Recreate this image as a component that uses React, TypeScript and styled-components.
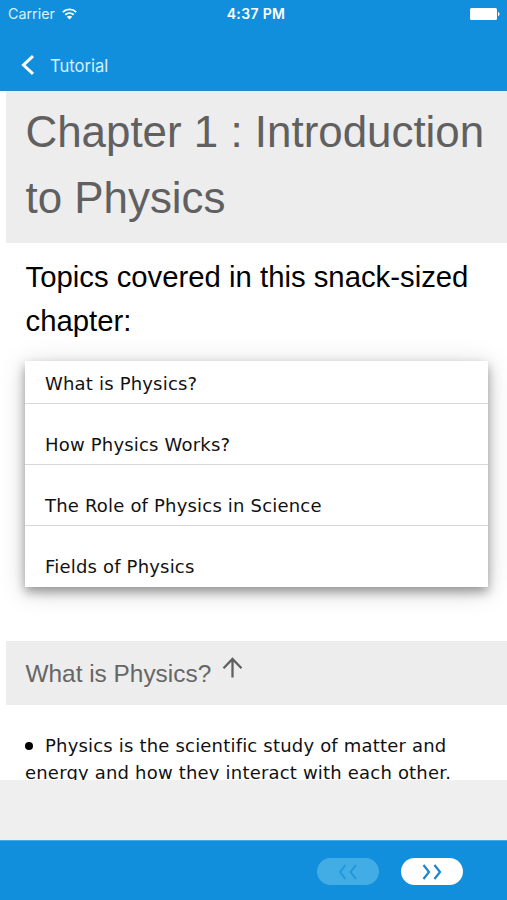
import React from "react";
import styled, { createGlobalStyle } from "styled-components";

const GlobalStyle = createGlobalStyle`
  html, body { margin: 0; padding: 0; background: #fff; }
  * { box-sizing: border-box; }
`;

const BLUE = "#128fdc";

const Screen = styled.div`
  width: 507px;
  height: 900px;
  display: flex;
  flex-direction: column;
  overflow: hidden;
  background: #fff;
`;

const Header = styled.header`
  flex: none;
  height: 91px;
  background: ${BLUE};
  border-bottom: 1px solid #2a86c2;
  color: #fff;
  font-family: Inter, sans-serif;
`;

const StatusBar = styled.div`
  height: 28px;
  display: grid;
  grid-template-columns: 1fr auto 1fr;
  align-items: center;
  padding: 0 7px 0 8px;
`;

const Carrier = styled.div`
  display: flex;
  align-items: center;
  gap: 7px;
  font-size: 14.3px;
  line-height: 20px;
  color: #d9f0ff;
`;

const Clock = styled.div`
  padding-left: 4px;
  font-size: 14px;
  line-height: 20px;
  font-weight: 600;
  letter-spacing: 0.35px;
`;

const BatterySlot = styled.div`
  display: flex;
  justify-content: flex-end;
`;

const NavBar = styled.div`
  height: 62px;
  display: flex;
  align-items: center;
  gap: 15px;
  padding: 12px 0 0 21px;
`;

const NavTitle = styled.span`
  padding-top: 1px;
  font-size: 16.6px;
  line-height: 24px;
  color: #d5eeff;
`;

const Content = styled.main`
  flex: none;
  height: 688.5px;
  overflow: hidden;
  padding-left: 6px;
`;

const ChapterTitle = styled.h1`
  margin: 0;
  height: 152px;
  padding: 8px 0 0 19.5px;
  background: #ededed;
  color: #606060;
  font: 400 43.9px/66px "Liberation Sans", Arial, sans-serif;
`;

const TopicsHeading = styled.h2`
  margin: 12px 0 0 19.5px;
  font: 400 29.3px/44px "Liberation Sans", Arial, sans-serif;
  color: #000;
`;

const TopicCard = styled.ul`
  margin: 18px 19px 0 19px;
  padding: 0;
  list-style: none;
  background: #fff;
  box-shadow: 0 5px 10px rgba(0, 0, 0, 0.36), 0 4px 26px rgba(0, 0, 0, 0.16);
`;

const TopicRow = styled.li<{ $first?: boolean; $last?: boolean }>`
  height: ${(p) => (p.$first ? 43 : p.$last ? 60.5 : 61)}px;
  padding: ${(p) => (p.$first ? 9 : 27)}px 0 0 20px;
  border-bottom: ${(p) => (p.$last ? "none" : "1px solid #d8d8d8")};
  font: 400 18px/27px "DejaVu Sans", Verdana, sans-serif;
  color: #111;
`;

const SectionHeading = styled.h3`
  display: flex;
  gap: 11px;
  margin: 54px 0 0;
  height: 64px;
  padding: 15px 0 0 19.5px;
  background: #ededed;
  color: #666;
  font: 400 24.4px/36px "Liberation Sans", Arial, sans-serif;
`;

const Paragraph = styled.div`
  margin: 27px 0 0 19px;
  font: 400 18px/27px "DejaVu Sans", Verdana, sans-serif;
  color: #111;
`;

const BulletLine = styled.div`
  display: flex;
  align-items: center;
  gap: 12px;
`;

const Bullet = styled.span`
  width: 8px;
  height: 8px;
  border-radius: 50%;
  background: #000;
  margin-top: 2px;
`;

const Line = styled.span`
  white-space: nowrap;
  letter-spacing: 0.19px;
`;

const AdSpace = styled.div`
  flex: 1;
  background: #efefef;
`;

const Footer = styled.footer`
  flex: none;
  height: 60px;
  display: flex;
  align-items: center;
  justify-content: flex-end;
  gap: 22px;
  padding: 2px 44px 0 0;
  border-top: 1px solid #4aa8e0;
  background: ${BLUE};
`;

const PageButton = styled.button<{ $disabled?: boolean }>`
  width: 62px;
  height: 27px;
  padding: 0;
  border: 0;
  border-radius: 14px;
  display: flex;
  align-items: center;
  justify-content: center;
  background: ${(p) => (p.$disabled ? "#42ace4" : "#fff")};
  color: ${(p) => (p.$disabled ? "#2198dc" : "#1c86cc")};
`;

const Icon = styled.svg`
  display: block;
  flex: none;
`;

const topics = [
  "What is Physics?",
  "How Physics Works?",
  "The Role of Physics in Science",
  "Fields of Physics",
];

export default function App() {
  return (
    <Screen>
      <GlobalStyle />
      <Header>
        <StatusBar>
          <Carrier>
            Carrier
            <Icon width="15" height="13" viewBox="0 0 15 13" fill="none" stroke="#fff" strokeWidth="1.9">
              <path d="M0.8 4.1C4.5 0.4 10.5 0.4 14.2 4.1" />
              <path d="M3.3 6.8C5.7 4.5 9.3 4.5 11.7 6.8" />
              <path d="M7.5 11.4L4.8 8.7C6.3 7.4 8.7 7.4 10.2 8.7Z" fill="#fff" stroke="none" />
            </Icon>
          </Carrier>
          <Clock>4:37 PM</Clock>
          <BatterySlot>
            <Icon width="30" height="12" viewBox="0 0 30 12" fill="#fff">
              <rect x="0" y="0" width="27" height="12" rx="1.5" />
              <path d="M28 4C30 4.5 30 7.5 28 8Z" />
            </Icon>
          </BatterySlot>
        </StatusBar>
        <NavBar>
          <Icon width="14" height="20" viewBox="0 0 14 20" fill="none" stroke="#fff" strokeWidth="3">
            <path d="M12 1.2L2.5 10L12 18.8" />
          </Icon>
          <NavTitle>Tutorial</NavTitle>
        </NavBar>
      </Header>
      <Content>
        <ChapterTitle>
          Chapter 1 : Introduction
          <br />
          to Physics
        </ChapterTitle>
        <TopicsHeading>
          Topics covered in this snack-sized
          <br />
          chapter:
        </TopicsHeading>
        <TopicCard>
          {topics.map((topic, i) => (
            <TopicRow key={topic} $first={i === 0} $last={i === topics.length - 1}>
              <Line>{topic}</Line>
            </TopicRow>
          ))}
        </TopicCard>
        <SectionHeading>
          What is Physics?
          <Icon width="21" height="22" viewBox="0 0 21 22" fill="none" stroke="#606060" strokeWidth="2.3">
            <path d="M10.5 21.5V3.5M1.5 12.3L10.5 3L19.5 12.3" />
          </Icon>
        </SectionHeading>
        <Paragraph>
          <BulletLine>
            <Bullet />
            <Line>Physics is the scientific study of matter and</Line>
          </BulletLine>
          <Line>energy and how they interact with each other.</Line>
        </Paragraph>
      </Content>
      <AdSpace />
      <Footer>
        <PageButton $disabled aria-label="Previous">
          <Icon width="20" height="16" viewBox="0 0 20 16" fill="none" stroke="currentColor" strokeWidth="2">
            <path d="M7.5 1L2 8L7.5 15M18 1L12.5 8L18 15" />
          </Icon>
        </PageButton>
        <PageButton aria-label="Next">
          <Icon width="20" height="16" viewBox="0 0 20 16" fill="none" stroke="currentColor" strokeWidth="2.2">
            <path d="M1.5 1L7 8L1.5 15M12.5 1L18 8L12.5 15" />
          </Icon>
        </PageButton>
      </Footer>
    </Screen>
  );
}
